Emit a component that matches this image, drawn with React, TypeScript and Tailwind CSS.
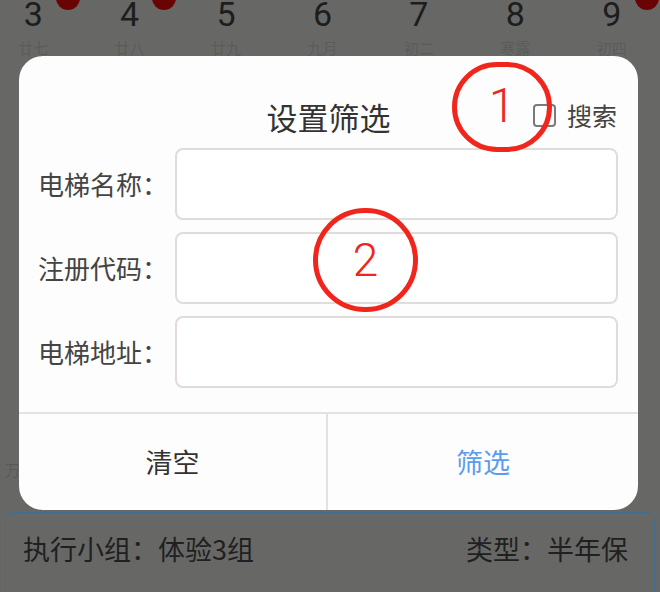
import React from "react";

const days = [
  { num: "3", lunar: "廿七", badge: true },
  { num: "4", lunar: "廿八", badge: true },
  { num: "5", lunar: "廿九", badge: false },
  { num: "6", lunar: "九月", badge: false },
  { num: "7", lunar: "初二", badge: false },
  { num: "8", lunar: "寒露", badge: false },
  { num: "9", lunar: "初四", badge: true },
];

const fields = ["电梯名称：", "注册代码：", "电梯地址："];

const cjk = { fontFamily: '"Noto Sans CJK SC", "Noto Sans", sans-serif' };

export default function App() {
  return (
    <div
      className="relative w-[660px] h-[592px] overflow-hidden bg-[#676866]"
      style={cjk}
    >
      {/* Calendar strip (behind overlay) */}
      <div className="flex ml-[-15px]">
        {days.map((d) => (
          <div key={d.num} className="relative w-[98px] flex flex-col items-center">
            <div
              className="text-[34px] leading-none mt-[-3px] text-[#1c1d1c]"
              style={{ fontFamily: "Roboto, sans-serif" }}
            >
              {d.num}
            </div>
            <div className="mt-[9px] text-[15px] leading-none text-[#5b5c5a]">
              {d.lunar}
            </div>
            {d.badge && (
              <div className="absolute top-[-14px] left-[71px] w-[24px] h-[24px] rounded-full bg-[#6a0404]" />
            )}
          </div>
        ))}
      </div>

      <div className="absolute left-[5px] top-[462px] text-[15px] leading-none text-[#595a58]">
        万
      </div>

      {/* Bottom card (behind overlay) */}
      <div className="absolute left-[5px] right-[5px] top-[512px] h-[100px] rounded-t-lg border-[1.5px] border-[#3d6f94] px-[17px] pt-[22px]">
        <div className="flex justify-between text-[27px] leading-none text-[#1f201f]">
          <span>执行小组：体验3组</span>
          <span className="mr-[9px]">类型：半年保</span>
        </div>
      </div>

      {/* Dialog */}
      <div className="absolute left-[19px] top-[56px] w-[619px] h-[454px] rounded-[24px] bg-[#fdfdfd] flex flex-col overflow-hidden">
        <div className="relative h-[92px] pt-[45px] flex items-start justify-center">
          <div className="text-[31px] leading-[32px] text-[#333]">设置筛选</div>
          <div className="absolute right-[21px] top-[47px] flex items-center gap-[11px]">
            <div className="w-[23px] h-[23px] rounded-[4px] border-2 border-[#7a7a7a]" />
            <span className="text-[25px] leading-none text-[#444]">搜索</span>
          </div>
        </div>

        <div className="flex flex-col gap-[12px] pl-[19px] pr-[20px]">
          {fields.map((f) => (
            <div key={f} className="flex items-center">
              <div className="w-[137px] text-[26px] leading-none text-[#444]">{f}</div>
              <div className="flex-1 h-[72px] rounded-[8px] border-2 border-[#e0dcdc] bg-white" />
            </div>
          ))}
        </div>

        <div className="mt-[24px] flex-1 flex border-t-2 border-[#e3e1e1]">
          <div className="w-[309px] flex items-center justify-center border-r-2 border-[#e3e1e1] text-[27px] text-[#333]">
            清空
          </div>
          <div className="flex-1 flex items-center justify-center text-[27px] text-[#5b9bf0]">
            筛选
          </div>
        </div>
      </div>

      {/* Annotations */}
      <div className="absolute left-[452px] top-[62px] w-[100px] h-[90px] rounded-full border-[5px] border-[#f0261c] flex items-center justify-center">
        <span
          className="text-[48px] leading-none text-[#f0261c] mt-[-2px]"
          style={{ fontFamily: "Roboto, sans-serif", fontWeight: 300 }}
        >
          1
        </span>
      </div>
      <div className="absolute left-[313px] top-[208px] w-[105px] h-[104px] rounded-full border-[5px] border-[#f0261c] flex items-center justify-center">
        <span
          className="text-[46px] leading-none text-[#f0261c]"
          style={{ fontFamily: "Roboto, sans-serif", fontWeight: 300 }}
        >
          2
        </span>
      </div>
    </div>
  );
}
